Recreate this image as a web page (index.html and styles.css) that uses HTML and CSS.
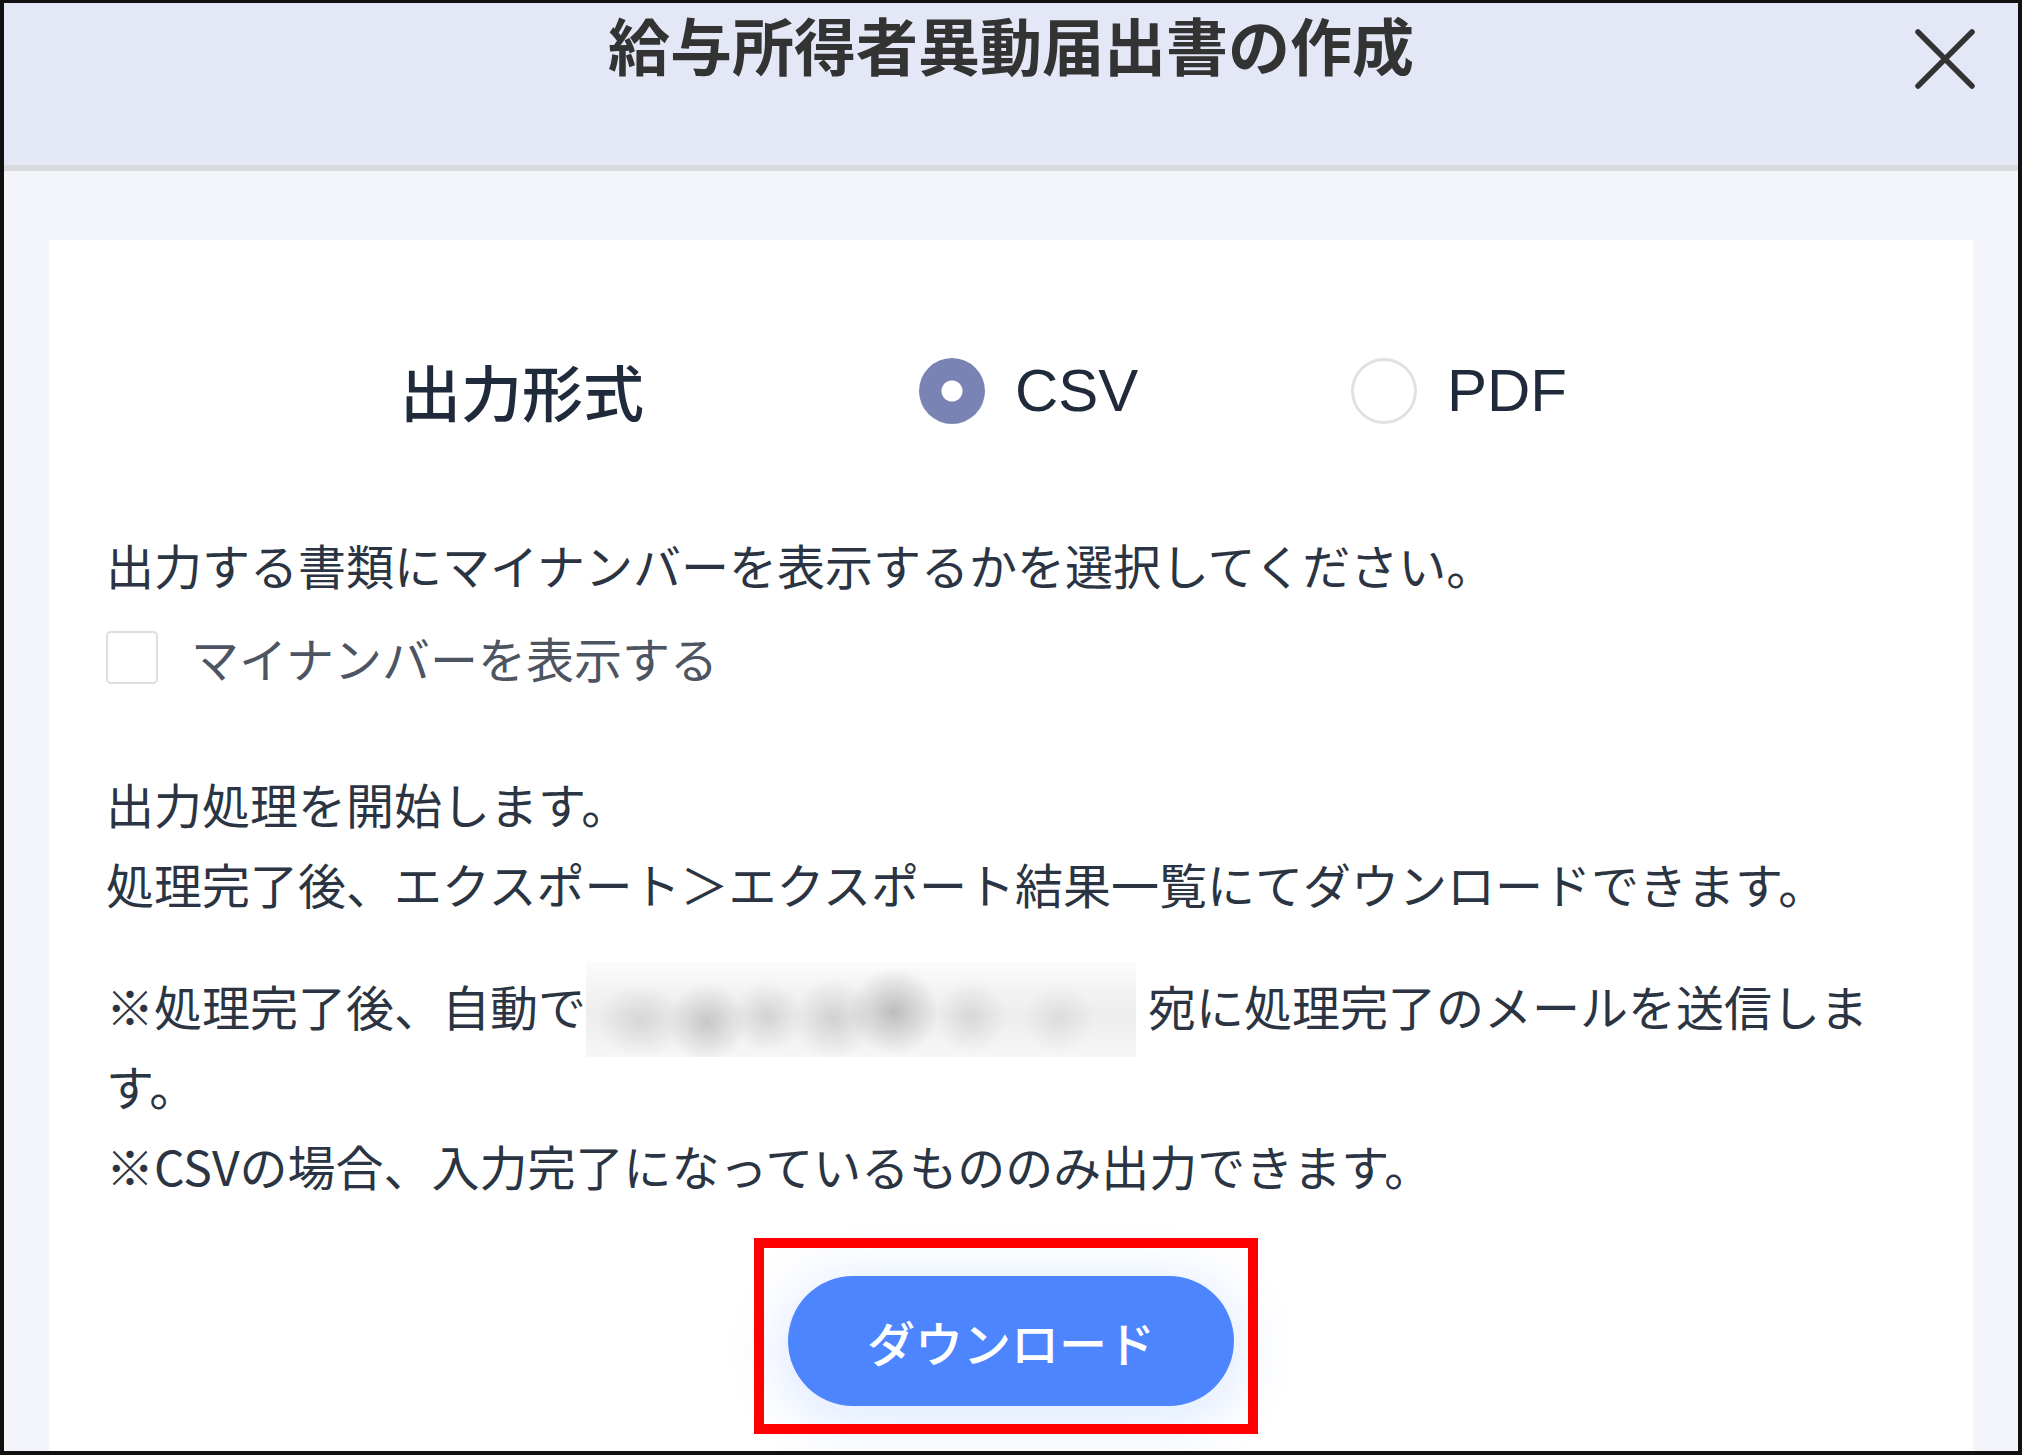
FILE: index.html
```html
<!DOCTYPE html>
<html lang="ja">
<head>
<meta charset="utf-8">
<title>給与所得者異動届出書の作成</title>
<link rel="stylesheet" href="styles.css">
</head>
<body>
<div class="frame">
  <header class="header">
    <div></div>
    <h1 class="title">給与所得者異動届出書の作成</h1>
    <button class="close" aria-label="閉じる">
      <svg width="62" height="62" viewBox="0 0 62 62"><path d="M4 4 L58 58 M58 4 L4 58" stroke="#333" stroke-width="5.5" stroke-linecap="round" fill="none"/></svg>
    </button>
  </header>
  <main class="main">
    <section class="card">
      <div class="format-row">
        <div class="format-label">出力形式</div>
        <label class="option">
          <span class="radio radio-on"></span>
          <span class="option-text">CSV</span>
        </label>
        <label class="option">
          <span class="radio"></span>
          <span class="option-text">PDF</span>
        </label>
      </div>
      <p class="text p1">出力する書類にマイナンバーを表示するかを選択してください。</p>
      <label class="check-row">
        <span class="checkbox"></span>
        <span class="check-text">マイナンバーを表示する</span>
      </label>
      <p class="text p2">出力処理を開始します。<br>処理完了後、エクスポート＞エクスポート結果一覧にてダウンロードできます。</p>
      <p class="text p3">※処理完了後、自動で<span class="masked"></span>宛に処理完了のメールを送信します。<br>※CSVの場合、入力完了になっているもののみ出力できます。</p>
      <div class="actions">
        <div class="btn-holder">
          <button class="download">ダウンロード</button>
          <div class="highlight"></div>
        </div>
      </div>
    </section>
  </main>
</div>
</body>
</html>
```
FILE: styles.css
```css
html, body {
  margin: 0;
  padding: 0;
  background: #fff;
}
body {
  font-family: "Noto Sans CJK JP", "Noto Sans", sans-serif;
}
.frame {
  width: 2022px;
  height: 1455px;
  box-sizing: border-box;
  border-style: solid;
  border-color: #111;
  border-width: 3px 4px 4px 4px;
  display: flex;
  flex-direction: column;
  overflow: hidden;
}
.header {
  flex: none;
  height: 162px;
  background: #e4e8f6;
  border-bottom: 6px solid #d9dadd;
  display: grid;
  grid-template-columns: 1fr auto 1fr;
  align-items: start;
}
.title {
  margin: 0;
  padding-top: 4px;
  font-size: 62px;
  line-height: 74px;
  font-weight: 700;
  color: #333;
  letter-spacing: 0;
}
.close {
  justify-self: end;
  margin: 25px 42px 0 0;
  padding: 0;
  border: 0;
  background: none;
  width: 62px;
  height: 62px;
  display: block;
}
.close svg { display: block; }
.main {
  flex: 1;
  background: #f4f5fa;
  padding: 69px 45px 0 45px;
  min-height: 0;
}
.card {
  background: #fff;
  height: 1400px;
  box-sizing: border-box;
  padding: 118px 100px 0 57px;
}
.format-row {
  display: flex;
  align-items: center;
  height: 66px;
}
.format-label {
  margin-left: 294px;
  width: 519px;
  font-size: 61px;
  font-weight: 500;
  color: #1f2b3b;
  line-height: 66px;
}
.option {
  width: 432px;
  display: flex;
  align-items: center;
  gap: 30px;
}
.radio {
  width: 66px;
  height: 66px;
  box-sizing: border-box;
  border-radius: 50%;
  border: 3px solid #e1e1e3;
  background: #fff;
  flex: none;
}
.radio-on {
  border: 0;
  background: radial-gradient(circle at center, #fff 0 10px, #7a84b4 11px);
}
.option-text {
  font-family: "Liberation Sans", Arial, sans-serif;
  font-size: 60px;
  color: #1f2b3b;
  line-height: 66px;
}
.text {
  margin: 0;
  font-size: 48px;
  line-height: 80px;
  color: #2b3442;
}
.p1 { margin-top: 100px; }
.check-row {
  margin-top: 13px;
  height: 80px;
  display: flex;
  align-items: center;
  gap: 33px;
}
.checkbox {
  width: 52px;
  height: 53px;
  box-sizing: border-box;
  border: 2px solid #dcdde0;
  border-radius: 5px;
  background: #fff;
  flex: none;
}
.check-text {
  font-size: 48px;
  color: #4d5562;
  line-height: 80px;
}
.p2 { margin-top: 66px; }
.p3 { margin-top: 42px; }
.masked {
  display: inline-block;
  width: 550px;
  height: 95px;
  vertical-align: top;
  margin: -3px 12px -15px 0;
  background:
    radial-gradient(ellipse 45px 38px at 10% 62%, rgba(160,160,160,0.30), rgba(160,160,160,0) 100%),
    radial-gradient(ellipse 40px 40px at 22% 64%, rgba(140,140,140,0.40), rgba(140,140,140,0) 100%),
    radial-gradient(ellipse 35px 36px at 33% 58%, rgba(150,150,150,0.30), rgba(150,150,150,0) 100%),
    radial-gradient(ellipse 40px 42px at 45% 60%, rgba(150,150,150,0.32), rgba(150,150,150,0) 100%),
    radial-gradient(ellipse 45px 44px at 56% 52%, rgba(130,130,130,0.45), rgba(130,130,130,0) 100%),
    radial-gradient(ellipse 35px 38px at 70% 58%, rgba(160,160,160,0.28), rgba(160,160,160,0) 100%),
    radial-gradient(ellipse 35px 36px at 86% 60%, rgba(170,170,170,0.25), rgba(170,170,170,0) 100%),
    linear-gradient(#fbfbfb, #ededed 55%, #f7f7f7);
}
.actions {
  margin-top: 71px;
  margin-right: -43px;
  display: flex;
  justify-content: center;
}
.btn-holder {
  position: relative;
}
.download {
  display: block;
  width: 446px;
  height: 130px;
  border: 0;
  border-radius: 65px;
  background: #4c85fe;
  color: #fff;
  font-family: "Noto Sans CJK JP", sans-serif;
  font-size: 48px;
  font-weight: 500;
  box-shadow: 0 10px 50px 12px rgba(77, 134, 255, 0.16);
}
.highlight {
  position: absolute;
  left: -34px;
  top: -38px;
  right: -24px;
  bottom: -28px;
  border: 10px solid #ff0000;
  pointer-events: none;
}
```
